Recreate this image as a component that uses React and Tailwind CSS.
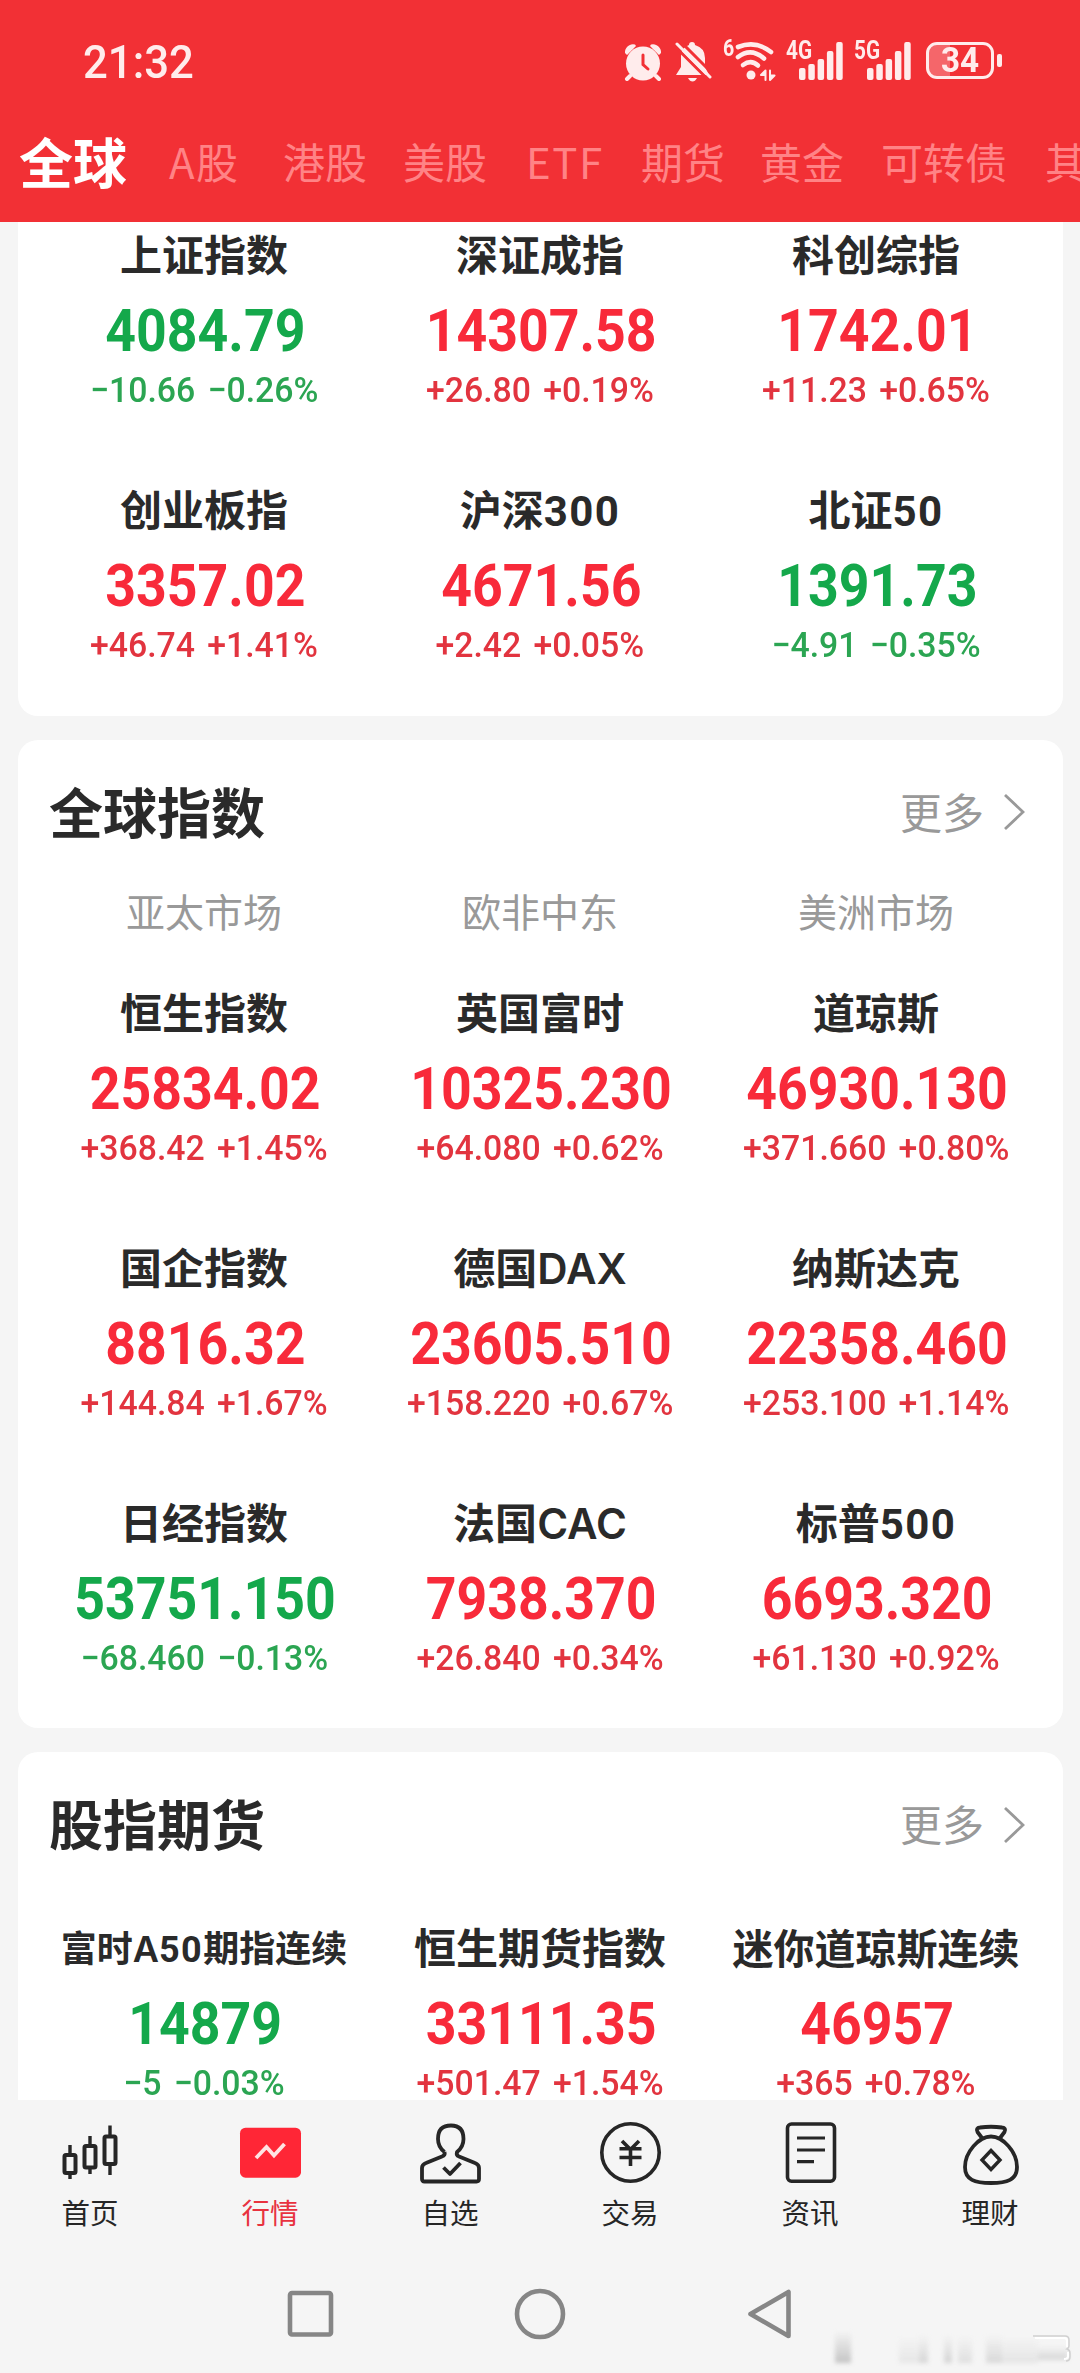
import React from "react";

const TABS = [
  { label: "A股", box: "w-[114px]" },
  { label: "港股", box: "w-[120px]" },
  { label: "美股", box: "w-[123px]" },
  { label: "ETF", box: "w-[115px]" },
  { label: "期货", box: "w-[119px]" },
  { label: "黄金", box: "w-[121px]" },
  { label: "可转债", box: "w-[164px]" },
  { label: "其他", box: "w-[84px]" },
];

const CHINA = [
  ["上证指数", "4084.79", "−10.66 −0.26%"],
  ["深证成指", "14307.58", "+26.80 +0.19%"],
  ["科创综指", "1742.01", "+11.23 +0.65%"],
  ["创业板指", "3357.02", "+46.74 +1.41%"],
  ["沪深300", "4671.56", "+2.42 +0.05%"],
  ["北证50", "1391.73", "−4.91 −0.35%"],
];

const GLOBAL = [
  ["恒生指数", "25834.02", "+368.42 +1.45%"],
  ["英国富时", "10325.230", "+64.080 +0.62%"],
  ["道琼斯", "46930.130", "+371.660 +0.80%"],
  ["国企指数", "8816.32", "+144.84 +1.67%"],
  ["德国DAX", "23605.510", "+158.220 +0.67%"],
  ["纳斯达克", "22358.460", "+253.100 +1.14%"],
  ["日经指数", "53751.150", "−68.460 −0.13%"],
  ["法国CAC", "7938.370", "+26.840 +0.34%"],
  ["标普500", "6693.320", "+61.130 +0.92%"],
];

const FUTURES = [
  ["富时A50期指连续", "14879", "−5 −0.03%"],
  ["恒生期货指数", "33111.35", "+501.47 +1.54%"],
  ["迷你道琼斯连续", "46957", "+365 +0.78%"],
];

// Latin letters and digits use their own faces beside the Chinese glyphs.
function MixedName({ text }) {
  return text.split(/([A-Z]+|\d+)/).map((part, i) => {
    if (/^[A-Z]/.test(part)) return <span key={i} className="font-[Inter] font-semibold">{part}</span>;
    if (/^\d/.test(part)) return <span key={i} className="font-[Roboto] tracking-[1.4px]">{part}</span>;
    return <React.Fragment key={i}>{part}</React.Fragment>;
  });
}

function Quote({ name, value, change }) {
  const down = change.startsWith("−");
  const size =
    name.length > 8 ? "text-[36px]" : name.length > 6 ? "text-[41px]" : "text-[42px]";
  return (
    <div className="flex flex-col items-center whitespace-nowrap">
      <div className={`h-[56px] font-bold leading-[56px] text-[#2a2a2a] ${size}`}>
        <MixedName text={name} />
      </div>
      <div
        className={`mt-[18px] h-[64px] origin-center translate-x-[1px] scale-x-[0.915] font-[Roboto] text-[58.6px] font-bold leading-[64px] ${
          down ? "text-[#14a84b]" : "text-[#f82a3a]"
        }`}
      >
        {value}
      </div>
      <div
        className={`mt-[11px] h-[32px] origin-center scale-x-[0.95] font-[Roboto] text-[35.6px] font-medium leading-[32px] [word-spacing:4px] ${
          down ? "text-[#2ba552]" : "text-[#e2343f]"
        }`}
      >
        {change}
      </div>
    </div>
  );
}

function Grid({ rows }) {
  return (
    <div className="grid grid-cols-3 gap-y-[74.3px]">
      {rows.map(([name, value, change]) => (
        <Quote key={name} name={name} value={value} change={change} />
      ))}
    </div>
  );
}

function SectionHead({ title }) {
  return (
    <div className="flex h-[80px] items-start justify-between pl-[13px] pr-[19px]">
      <h2 className="text-[54px] font-bold leading-[75px] text-[#2a2a2a]">{title}</h2>
      <div className="flex items-center gap-[19px] text-[42px] leading-[76px] text-[#999]">
        更多
        <svg className="mt-[3px]" width="22" height="38" viewBox="0 0 22 38" fill="none" stroke="#999" strokeWidth="2.8">
          <path d="M2 2 L20 19 L2 36" />
        </svg>
      </div>
    </div>
  );
}

function Signal({ label }) {
  return (
    <div className="relative h-[40px] w-[57px]">
      <span className="absolute left-0 top-0 origin-left scale-x-[0.8] font-[Roboto] text-[26px] font-bold leading-[20px]">
        {label}
      </span>
      <svg className="absolute bottom-0 right-0" width="44" height="39" viewBox="0 0 44 39" fill="#ffecec">
        <rect x="0" y="27" width="6.5" height="12" rx="2" />
        <rect x="9.3" y="23" width="6.5" height="16" rx="2" />
        <rect x="18.6" y="18" width="6.5" height="21" rx="2" />
        <rect x="27.9" y="10" width="6.5" height="29" rx="2" />
        <rect x="37.2" y="1" width="6.5" height="38" rx="2" />
      </svg>
    </div>
  );
}

function StatusBar() {
  return (
    <div className="flex h-[119px] items-start pl-[83px] pt-[40px] text-[#ffecec]">
      <div className="w-[541px]">
        <div className="origin-left scale-x-[0.95] font-[Roboto] text-[46px] font-medium leading-[44px]">21:32</div>
      </div>
      <svg className="mt-[3px]" width="38" height="38" viewBox="0 0 38 38" fill="#ffecec">
        <path d="M1 10 A8 8 0 0 1 11 1.5 L12 3 L3 12 Z M37 10 A8 8 0 0 0 27 1.5 L26 3 L35 12 Z" />
        <circle cx="19" cy="20.5" r="17" />
        <path d="M6 33 L3 36 M32 33 L35 36" stroke="#ffecec" strokeWidth="4" strokeLinecap="round" />
        <path d="M19 12 V21.5 L24 26" fill="none" stroke="#f23035" strokeWidth="3" strokeLinecap="round" />
      </svg>
      <svg className="ml-[13px] mt-[2px]" width="37" height="41" viewBox="0 0 37 41" fill="#ffecec">
        <path d="M14 3 Q14 0 17 0 Q20 0 20 3 Q30 6 30 16 V25 L34 33 H1 L6 25 V14 Q6 6 14 3 Z" />
        <path d="M13 36 H22 Q20 39.500 17.500 39.500 Q15 39.500 13 36 Z" />
        <path d="M-1 3.500 L34 38.500 M4 -2 L38 32" stroke="#f23035" strokeWidth="3" />
        <path d="M2 2 L35 35" stroke="#ffecec" strokeWidth="3" strokeLinecap="round" />
      </svg>
      <div className="relative ml-[11px] h-[42px] w-[53px]">
        <span className="absolute left-0 top-[-1px] origin-left scale-x-[0.85] font-[Roboto] text-[23px] font-bold leading-[20px]">6</span>
        <svg className="absolute left-[10px] top-0" width="44" height="42" viewBox="0 0 44 42" fill="none" stroke="#ffecec" strokeWidth="4.6" strokeLinecap="round">
          <path d="M5 7 Q23 0 38 12" />
          <path d="M5 17 Q18 7 31 18.500" />
          <path d="M10 25 Q18 19 25 25.500" />
          <circle cx="18" cy="35" r="4.500" fill="#ffecec" stroke="none" />
          <path d="M32.500 40 V30.500 L28 35 H32.500 M37 30.500 V40 L41.500 35.500 H37" strokeWidth="2" strokeLinejoin="round" fill="#ffecec" />
        </svg>
      </div>
      <div className="ml-[10px]"><Signal label="4G" /></div>
      <div className="ml-[11px]"><Signal label="5G" /></div>
      <div className="ml-[15px] mt-[2px] flex items-center">
        <div className="flex h-[37px] w-[68px] items-center justify-center rounded-[11px] border-[3.5px] border-[#ffecec] bg-linear-to-r from-[#f5666a] from-34% to-transparent to-34%">
          <span className="scale-x-[0.95] font-[Roboto] text-[35px] font-bold leading-[30px]">34</span>
        </div>
        <div className="ml-[3px] h-[13px] w-[5px] rounded-[2px] bg-[#ffecec]" />
      </div>
    </div>
  );
}

const INK = "#262626";

const NAV = [
  {
    label: "首页",
    icon: (
      <g fill="none" stroke={INK} strokeWidth="4">
        <rect x="4.500" y="33" width="11" height="18" rx="1.500" />
        <rect x="24.500" y="24" width="11" height="21.500" rx="1.500" />
        <rect x="44.500" y="14.500" width="11" height="27.500" rx="1.500" />
        <path d="M10 23 V33 M10 51 V57 M30 14 V24 M30 46 V52 M50 3.500 V14 M50 42 V53" strokeWidth="3.400" />
      </g>
    ),
  },
  {
    label: "行情",
    active: true,
    icon: (
      <g>
        <rect x="0" y="5.700" width="61" height="50" rx="5.500" fill="#ff2636" />
        <path d="M16 36 L26.500 25 L34 33.500 L44.500 22" fill="none" stroke="#ffe3e3" strokeWidth="3.800" />
      </g>
    ),
  },
  {
    label: "自选",
    icon: (
      <g fill="none" stroke={INK} strokeWidth="3.800" strokeLinejoin="round">
        <path d="M24.500 30 Q18 25 18 17 Q18 3.500 31 3.500 Q43.500 3.500 43.500 17 Q43.500 25 37 30 Q36 33.500 39 34.500 L55 41 Q59 42.500 59 46 V57 Q59 59.500 56.500 59.500 H4.500 Q2 59.500 2 57 V46 Q2 42.500 6 41 L22 34.500 Q25.500 33.500 24.500 30" />
        <path d="M23.500 45.500 L30 52 L40.500 41" />
      </g>
    ),
  },
  {
    label: "交易",
    icon: (
      <g fill="none" stroke={INK} strokeWidth="3.600">
        <circle cx="30.500" cy="30.500" r="28.700" />
        <path d="M22 19 L30.500 27.500 L39 19 M30.500 26 V44 M19.500 26.700 H41.500 M19.500 35.500 H41.500" />
      </g>
    ),
  },
  {
    label: "资讯",
    icon: (
      <g fill="none" stroke={INK} strokeWidth="3.600">
        <rect x="7.500" y="2" width="47" height="57.200" rx="4" />
        <path d="M17 16 H45 M17 28 H45 M17 39.700 H34" strokeWidth="3.200" />
      </g>
    ),
  },
  {
    label: "理财",
    icon: (
      <g fill="none" stroke={INK} strokeWidth="3.800" strokeLinejoin="round">
        <path d="M22 16 L17.500 10 Q15.500 6 20 5.500 Q31 4 42 5.500 Q46.500 6 44.500 10 L40 16" />
        <path d="M31 14.500 C43 14.500 57 30 57 45 C57 58 47 61 31 61 C15 61 5 58 5 45 C5 30 19 14.500 31 14.500 Z" />
        <path d="M31 28.500 L40 38 L31 47.500 L22 38 Z" strokeLinejoin="miter" strokeWidth="3.400" />
      </g>
    ),
  },
];

function BottomNav() {
  return (
    <nav className="grid h-[160px] grid-cols-6 pt-[22px]">
      {NAV.map(({ label, icon, active }) => (
        <div key={label} className="flex flex-col items-center">
          <svg width="61" height="63" viewBox="0 0 61 63" className="overflow-visible">{icon}</svg>
          <span className={`mt-[7px] text-[28.5px] leading-[40px] ${active ? "text-[#e8323f]" : "text-[#262626]"}`}>{label}</span>
        </div>
      ))}
    </nav>
  );
}

function SystemNav() {
  return (
    <div className="flex h-[113px] items-start pl-[287px] pt-[28px]">
      <svg width="506" height="52" viewBox="0 0 506 52" fill="none" stroke="#868686" strokeWidth="4.600" strokeLinejoin="round">
        <rect x="3" y="5" width="41" height="41.500" rx="2" />
        <circle cx="253" cy="26" r="23" />
        <path d="M501.500 4 V48 L463.500 26 Z" />
      </svg>
    </div>
  );
}

// Faint smudge in the corner, with a small white bracket at its right end.
function CornerSmudge() {
  return (
    <div className="absolute bottom-[10px] right-[9px] flex h-[34px] w-[236px] items-end">
      <div className="flex h-full w-full items-end blur-[2px]">
        <div className="h-[32px] w-[16px] bg-linear-to-b from-transparent to-[#c4c4c4]" />
        <div className="ml-[48px] h-[26px] w-[20px] bg-linear-to-b from-transparent to-[#e6e6e6]" />
        <div className="h-[28px] w-[9px] bg-linear-to-b from-transparent to-[#d6d6d6]" />
        <div className="ml-[16px] h-[28px] w-[8px] bg-linear-to-b from-transparent to-[#d4d4d4]" />
        <div className="ml-[6px] h-[27px] w-[14px] bg-linear-to-b from-transparent to-[#dfdfdf]" />
        <div className="ml-[14px] h-[28px] w-[16px] bg-linear-to-b from-transparent to-[#d8d8d8]" />
        <div className="h-[26px] w-[36px] bg-linear-to-b from-transparent to-[#e4e4e4]" />
        <div className="mb-[3px] h-[14px] w-[30px] bg-linear-to-b from-transparent to-[#d6d6d6]" />
      </div>
      <svg className="absolute right-0 top-[6px]" width="48" height="28" viewBox="0 0 48 28" fill="none">
        <path d="M10 1 H42 Q46 1 46 5 V11 Q46 13 44 14 Q47 15 47 18 V22 Q47 26 43 26" stroke="#d0d0d0" strokeWidth="1.500" />
        <path d="M12 3 H41 Q44 3 44 6 V12 M45 17 V21 Q45 24 41 24" stroke="#fff" strokeWidth="2" />
      </svg>
    </div>
  );
}

export default function App() {
  return (
    <div className="relative flex h-[2373px] w-[1080px] flex-col overflow-hidden bg-[#f5f5f5] font-['Noto_Sans_CJK_SC',sans-serif]">
      <header className="h-[222px] shrink-0 bg-[#f23035]">
        <StatusBar />
        <div className="flex h-[84px] items-center overflow-hidden whitespace-nowrap pl-[19px]">
          <div className="w-[150px] shrink-0 text-[54px] font-bold leading-[84px] text-white">全球</div>
          {TABS.map(({ label, box }) => (
            <div key={label} className={`shrink-0 text-[42px] leading-[84px] text-[#ff8386] ${box}`}>
              {label.split(/([A-Z]+)/).map((part, i) =>
                /[A-Z]/.test(part) ? (
                  <span key={i} className="tracking-[1.5px]">{part}</span>
                ) : (
                  part
                )
              )}
            </div>
          ))}
        </div>
      </header>

      <main className="flex h-[1878px] shrink-0 flex-col gap-6 overflow-hidden px-[17.5px]">
        <section className="h-[493.500px] shrink-0 rounded-b-[20px] bg-white px-[18.500px] pt-[3px]">
          <Grid rows={CHINA} />
        </section>
        <section className="h-[988.500px] shrink-0 rounded-[20px] bg-white px-[18.500px] pt-[33px]">
          <SectionHead title="全球指数" />
          <div className="mt-[30px] grid h-[60px] grid-cols-3 text-center text-[39px] leading-[55px] text-[#999]">
            <div>亚太市场</div>
            <div>欧非中东</div>
            <div>美洲市场</div>
          </div>
          <div className="mt-[40px]">
            <Grid rows={GLOBAL} />
          </div>
        </section>
        <section className="h-[500px] shrink-0 rounded-t-[20px] bg-white px-[18.500px] pt-[33px]">
          <SectionHead title="股指期货" />
          <div className="mt-[53px]">
            <Grid rows={FUTURES} />
          </div>
        </section>
      </main>

      <BottomNav />
      <SystemNav />
      <CornerSmudge />
    </div>
  );
}
